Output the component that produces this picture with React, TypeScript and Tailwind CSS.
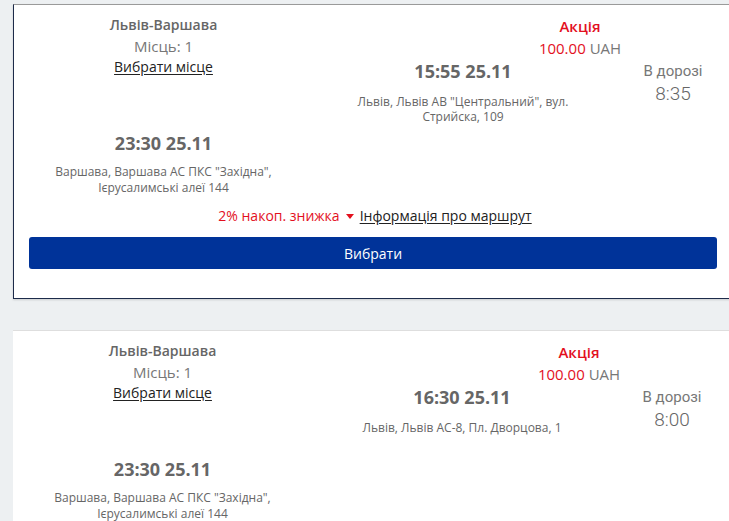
import React from "react";

type Trip = {
  dep: string;
  depAddr: React.ReactNode;
  dur: string;
  selected?: boolean;
};

const trips: Trip[] = [
  {
    dep: "15:55 25.11",
    depAddr: (
      <>
        Львів, Львів АВ "Центральний", вул.
        <br />
        Стрийска, 109
      </>
    ),
    dur: "8:35",
    selected: true,
  },
  {
    dep: "16:30 25.11",
    depAddr: <>Львів, Львів АС-8, Пл. Дворцова, 1</>,
    dur: "8:00",
  },
];

function Card({ t }: { t: Trip }) {
  return (
    <div
      className={
        "w-[720px] bg-white px-[15px] " +
        (t.selected
          ? "border-l border-b border-r border-l-[#1d2b4a] border-b-[#1d2b4a] border-r-[#1d2b4a] border-t border-t-[#9a9a9a] shadow-[0_1px_2px_rgba(0,0,0,0.15)]"
          : "border-t border-t-[#dedede]")
      }
    >
      <div className="flex">
        {/* left column */}
        <div className="w-[269px] shrink-0 text-center pt-[10px]">
          <div className="text-[14px] font-semibold leading-[20px] text-[#666]">Львів-Варшава</div>
          <div className="text-[15px] leading-[22px] text-[#777]">Місць: 1</div>
          <div className="text-[14px] leading-[20px] text-[#222] underline underline-offset-2">Вибрати місце</div>
          <div className="mt-[54px] text-[18px] font-bold leading-[24px] text-[#666]">23:30 25.11</div>
          <div className="mt-[9px] text-[12px] leading-[16px] text-[#666]">
            Варшава, Варшава АС ПКС "Західна",
            <br />
            Ієрусалимські алеї 144
          </div>
        </div>
        {/* right section */}
        <div className="flex-1 pt-[10px]">
          <div className="ml-[222px] w-[120px] text-center">
            <div className="text-[15px] font-semibold leading-[22px] text-[#e3101e]">Акція</div>
            <div className="text-[15px] leading-[22px]">
              <span className="text-[#e3101e]">100.00</span> <span className="text-[#777]">UAH</span>
            </div>
          </div>
          <div className="flex">
            <div className="ml-[40px] w-[250px] text-center">
              <div className="text-[18px] font-bold leading-[24px] text-[#666]">{t.dep}</div>
              <div className="mt-[11px] text-[12px] leading-[15px] text-[#666]">{t.depAddr}</div>
            </div>
            <div className="ml-[40px] w-[90px] text-center font-['Roboto',sans-serif] text-[#777] pt-[2px]">
              <div className="text-[15px] leading-[20px]">В дорозі</div>
              <div className="text-[19px] font-light leading-[26px] text-[#666]">{t.dur}</div>
            </div>
          </div>
        </div>
      </div>
      <div className="mt-[10px] flex items-center justify-center text-[14px] leading-[20px] pl-[4px]">
        <span className="text-[#e3101e]">2% накоп. знижка</span>
        <svg width="8" height="5" viewBox="0 0 8 5" className="mx-[6px]">
          <path d="M0 0 L8 0 L4 5 Z" fill="#e3101e" />
        </svg>
        <span className="text-[#222] underline underline-offset-2">Інформація про маршрут</span>
      </div>
      <div className="mt-[11px] h-[32px] rounded-[3px] bg-[#003399] flex items-center justify-center text-white text-[14px]">
        Вибрати
      </div>
      <div className="h-[29px]" />
    </div>
  );
}

export default function App() {
  return (
    <div className="h-[521px] w-[729px] overflow-hidden bg-[#edf0f2] pt-[4px] pl-[13px] font-['Open_Sans',sans-serif]">
      <div className="flex flex-col gap-[31px]">
        {trips.map((t, i) => (
          <Card key={i} t={t} />
        ))}
      </div>
    </div>
  );
}
